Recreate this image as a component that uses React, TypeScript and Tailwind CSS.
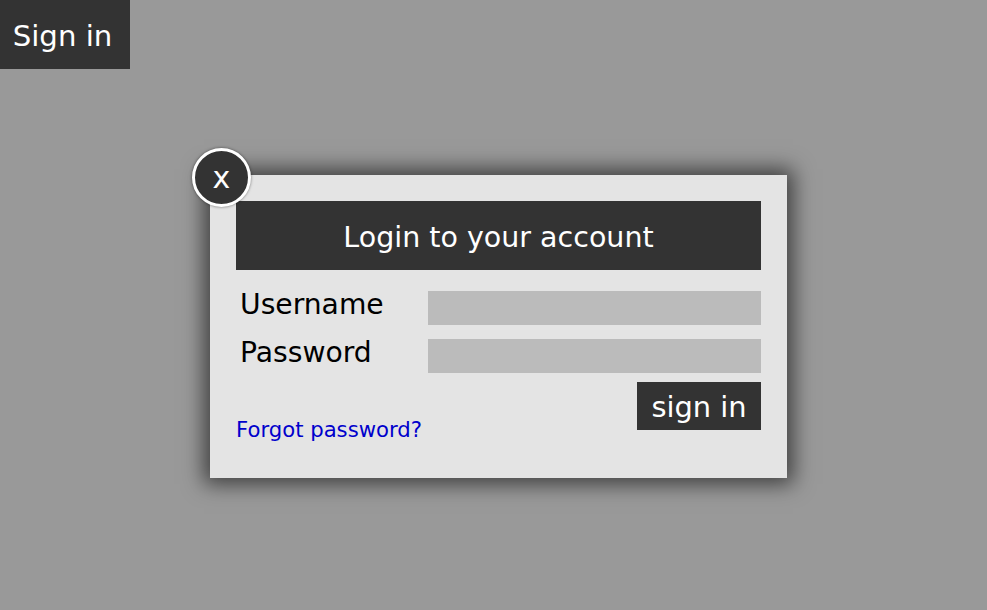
export default function App() {
  return (
    <div className="h-[610px] overflow-hidden bg-[#999999] font-['DejaVu_Sans',sans-serif]">
      <button className="flex h-[69px] w-[130px] items-center justify-center bg-[#333333] pr-[5px] pt-[4px] text-[29.2px] text-white">
        Sign in
      </button>

      {/* Login modal */}
      <div className="relative ml-[210px] mt-[106px] h-[303px] w-[577px] bg-[#e4e4e4] p-[26px] shadow-[0_0_20px_6px_rgba(0,0,0,0.6)]">
        <button className="absolute left-[-18px] top-[-27px] flex h-[59px] w-[59px] items-center justify-center rounded-full border-[3px] border-white bg-[#333333] text-[30px] leading-none text-white shadow-[0_0_3px_rgba(0,0,0,0.5)]">
          x
        </button>

        <div className="flex h-[69px] items-center justify-center bg-[#333333] pt-[6px] text-[28.5px] text-white">
          Login to your account
        </div>

        <div className="mt-[21px] flex items-start">
          <label className="ml-1 mt-[1px] w-[188px] text-[28.2px] leading-[26px] text-black">Username</label>
          <div className="h-[34px] flex-1 bg-[#bbbbbb]" />
        </div>
        <div className="mt-[14px] flex items-start">
          <label className="ml-1 mt-[1px] w-[188px] text-[28.2px] leading-[26px] text-black">Password</label>
          <div className="h-[34px] flex-1 bg-[#bbbbbb]" />
        </div>

        <div className="mt-[9px] flex items-start justify-between">
          <a className="mt-[35px] text-[21.2px] leading-[26px] text-[#0000cc]">Forgot password?</a>
          <button className="flex h-[48px] w-[124px] items-center justify-center bg-[#333333] pt-[3px] text-[28.9px] text-white">
            sign in
          </button>
        </div>
      </div>
    </div>
  );
}
